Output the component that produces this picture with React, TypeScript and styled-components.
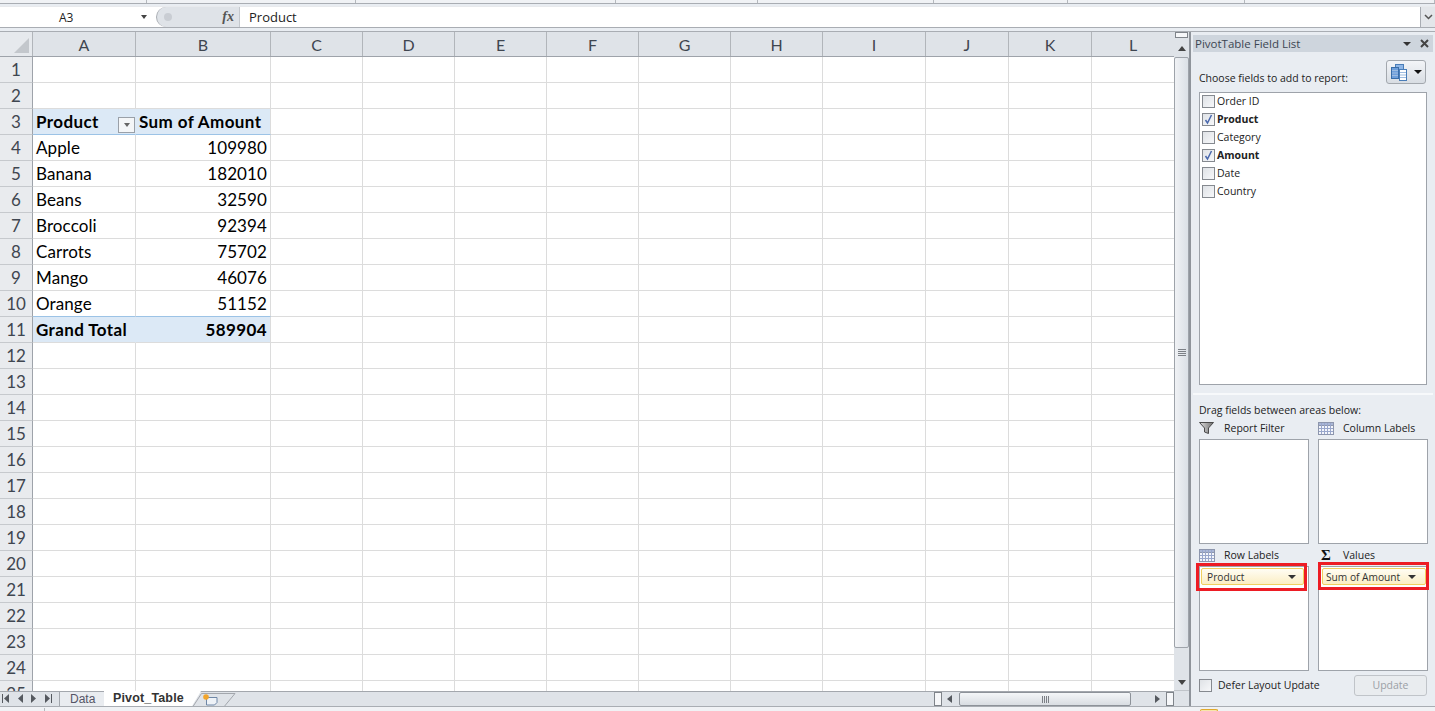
import React from "react";
import styled, { createGlobalStyle } from "styled-components";

const columns = [
    { name: "A", width: 103 },
    { name: "B", width: 135 },
    { name: "C", width: 92 },
    { name: "D", width: 92 },
    { name: "E", width: 92 },
    { name: "F", width: 92 },
    { name: "G", width: 92 },
    { name: "H", width: 92 },
    { name: "I", width: 103 },
    { name: "J", width: 83 },
    { name: "K", width: 83 },
    { name: "L", width: 83 },
];

const gridColumns = `33px ${columns.map((c) => c.width + "px").join(" ")}`;

const stripWidths = [147, 209, 260, 142, 176, 134, 177, 190];

const products = [
    ["Apple", "109980"],
    ["Banana", "182010"],
    ["Beans", "32590"],
    ["Broccoli", "92394"],
    ["Carrots", "75702"],
    ["Mango", "46076"],
    ["Orange", "51152"],
];

const fields = [
    { name: "Order ID", on: false },
    { name: "Product", on: true },
    { name: "Category", on: false },
    { name: "Amount", on: true },
    { name: "Date", on: false },
    { name: "Country", on: false },
];

const cellsFor = (row: number): [string, string, "head" | "total" | "plain"] => {
    if (row === 3) return ["Product", "Sum of Amount", "head"];
    if (row >= 4 && row <= 10) {
        const p = products[row - 4];
        return [p[0], p[1], "plain"];
    }
    if (row === 11) return ["Grand Total", "589904", "total"];
    return ["", "", "plain"];
};

const TableGlyph = () => (
    <svg width="16" height="13" viewBox="0 0 16 13">
        <rect x="0.5" y="0.5" width="15" height="12" fill="#f4f6fb" stroke="#8d96ad" />
        <rect x="0.5" y="0.5" width="15" height="3" fill="#a9b6d6" stroke="#8d96ad" />
        <path d="M3.5 1v11M6.5 1v11M9.5 1v11M12.5 1v11M1 6.5h14M1 9.5h14" stroke="#99a7cc" fill="none" />
    </svg>
);

const FilterGlyph = () => (
    <svg width="15" height="12" viewBox="0 0 15 12">
        <defs>
            <linearGradient id="funnel" x1="0" x2="1" y1="0" y2="0">
                <stop offset="0" stopColor="#e0e0e0" />
                <stop offset="1" stopColor="#6d6d6d" />
            </linearGradient>
        </defs>
        <path d="M0.5 0.5h14l-5 5.5v5.5l-4-1.5v-4z" fill="url(#funnel)" stroke="#4a4a4a" />
    </svg>
);

const CheckGlyph = () => (
    <svg width="11" height="11" viewBox="0 0 11 11">
        <path d="M2.5 6l2 3 4-8" fill="none" stroke="#4a68ad" strokeWidth="1.5" />
    </svg>
);

const FieldsGlyph = () => (
    <svg width="16" height="17" viewBox="0 0 16 17">
        <rect x="4.5" y="0.5" width="8" height="12" fill="#8fb6e6" stroke="#4a7db8" />
        <rect x="0.5" y="3.5" width="7" height="11" fill="#6f9fdb" stroke="#3a6ea8" />
        <rect x="8.5" y="5.5" width="7" height="11" fill="#fff" stroke="#4a7db8" />
        <path d="M9 8.5h6M9 11h6M9 13.5h6M1 6.5h6M1 9h6M1 11.5h6" stroke="#9dbce0" />
    </svg>
);

const NewTabGlyph = () => (
    <svg width="44" height="15" viewBox="0 0 44 15">
        <path d="M0 15L9.5 0.5H43L31 15" fill="#dfe3e8" stroke="#a3a7ad" />
        <path d="M14.5 4.5h10.5v5l-2.5 2.5h-8z" fill="#eef2f7" stroke="#6f87a6" />
        <circle cx="14" cy="4" r="2.8" fill="#f2a52c" />
    </svg>
);

const NavFirst = () => (
    <svg width="7" height="9" viewBox="0 0 7 9">
        <path d="M0.5 0v9" stroke="#55595f" />
        <path d="M7 0v9L2 4.5z" fill="#55595f" />
    </svg>
);

const NavPrev = () => (
    <svg width="5" height="9" viewBox="0 0 5 9">
        <path d="M5 0v9L0 4.5z" fill="#55595f" />
    </svg>
);

const NavNext = () => (
    <svg width="5" height="9" viewBox="0 0 5 9">
        <path d="M0 0v9L5 4.5z" fill="#55595f" />
    </svg>
);

const NavLast = () => (
    <svg width="7" height="9" viewBox="0 0 7 9">
        <path d="M0 0v9L5 4.5z" fill="#55595f" />
        <path d="M6.5 0v9" stroke="#55595f" />
    </svg>
);

const App = () => {
    return (
        <Page>
            <GlobalStyle />
            <TopStrip>
                {stripWidths.map((w, i) => (
                    <StripCell key={i} $w={w} />
                ))}
            </TopStrip>
            <FormulaBar>
                <NameBox>
                    <span>A3</span>
                    <Caret $c="#444" $mr={9} />
                </NameBox>
                <FxBlock>
                    <FxKnob />
                    <Fx>fx</Fx>
                </FxBlock>
                <FormulaText>Product</FormulaText>
                <FormulaScroll>
                    <svg width="9" height="6" viewBox="0 0 9 6">
                        <path d="M1 1l3.5 3.5L8 1" fill="none" stroke="#555" strokeWidth="1.5" />
                    </svg>
                </FormulaScroll>
            </FormulaBar>
            <Main>
                <SheetArea>
                    <Grid>
                        <HeaderRow>
                            <Corner>
                                <CornerMark />
                            </Corner>
                            {columns.map((c) => (
                                <ColHead key={c.name}>{c.name}</ColHead>
                            ))}
                        </HeaderRow>
                        {Array.from({ length: 25 }, (_, i) => i + 1).map((row) => {
                            const [a, b, kind] = cellsFor(row);
                            return (
                                <Row key={row}>
                                    <RowHead>{row}</RowHead>
                                    {columns.map((c, i) => (
                                        <Cell
                                            key={c.name}
                                            $kind={i < 2 ? kind : "plain"}
                                            $right={i === 1 && kind !== "head"}
                                            $plainEdge={i === 1 && kind !== "plain"}
                                            $blueEdge={i < 2 && row === 10}
                                        >
                                            {i === 0 && a}
                                            {i === 1 && b}
                                            {i === 0 && kind === "head" && (
                                                <FilterButton>
                                                    <Caret $c="#666" />
                                                </FilterButton>
                                            )}
                                        </Cell>
                                    ))}
                                </Row>
                            );
                        })}
                    </Grid>
                    <SheetBar>
                        <TabNav>
                            <NavFirst />
                            <NavPrev />
                            <NavNext />
                            <NavLast />
                        </TabNav>
                        <Tab>Data</Tab>
                        <ActiveTab>Pivot_Table</ActiveTab>
                        <NewTab>
                            <NewTabGlyph />
                        </NewTab>
                        <BarGap />
                        <SplitHandle />
                        <HScroll>
                            <ArrowLeft />
                            <HThumb>
                                <Grip />
                            </HThumb>
                            <ArrowRight />
                        </HScroll>
                        <SplitHandle />
                    </SheetBar>
                </SheetArea>
                <VScroll>
                    <VSplit />
                    <ArrowUp />
                    <VThumb>
                        <VGrip />
                    </VThumb>
                    <VTrack />
                    <ArrowDown />
                    <VFoot />
                </VScroll>
                <Panel>
                    <PanelTitle>
                        <span>PivotTable Field List</span>
                        <TitleIcons>
                            <Caret $c="#333" $big />
                            <svg width="9" height="9" viewBox="0 0 9 9">
                                <path d="M1 1l7 7M8 1l-7 7" stroke="#444" strokeWidth="2" />
                            </svg>
                        </TitleIcons>
                    </PanelTitle>
                    <ChooseRow>
                        <ChooseLabel>Choose fields to add to report:</ChooseLabel>
                        <LayoutButton>
                            <FieldsGlyph />
                            <Caret $c="#111" $big />
                        </LayoutButton>
                    </ChooseRow>
                    <FieldBox>
                        {fields.map((f) => (
                            <FieldRow key={f.name}>
                                <CheckBox>{f.on && <CheckGlyph />}</CheckBox>
                                <FieldName $on={f.on}>{f.name}</FieldName>
                            </FieldRow>
                        ))}
                    </FieldBox>
                    <Splitter />
                    <DragLabel>Drag fields between areas below:</DragLabel>
                    <Areas>
                        <Area>
                            <AreaTitle>
                                <AreaIcon>
                                    <FilterGlyph />
                                </AreaIcon>
                                Report Filter
                            </AreaTitle>
                            <AreaBox />
                        </Area>
                        <Area>
                            <AreaTitle>
                                <AreaIcon>
                                    <TableGlyph />
                                </AreaIcon>
                                Column Labels
                            </AreaTitle>
                            <AreaBox />
                        </Area>
                        <Area>
                            <AreaTitle>
                                <AreaIcon>
                                    <TableGlyph />
                                </AreaIcon>
                                Row Labels
                            </AreaTitle>
                            <AreaBox>
                                <Chip $l={1} $r={4} $pr={7} $pl={5}>
                                    <span>Product</span>
                                    <Caret $c="#333" $big />
                                </Chip>
                                <Highlight $left={-4} $right={1} $top={-4} />
                            </AreaBox>
                        </Area>
                        <Area>
                            <AreaTitle>
                                <AreaIcon>
                                    <Sigma>Σ</Sigma>
                                </AreaIcon>
                                Values
                            </AreaTitle>
                            <AreaBox>
                                <Chip $l={3} $r={1} $pr={9} $pl={3}>
                                    <span>Sum of Amount</span>
                                    <Caret $c="#333" $big />
                                </Chip>
                                <Highlight $left={-1} $right={-2} $top={-5} />
                            </AreaBox>
                        </Area>
                    </Areas>
                    <PanelFoot>
                        <DeferLabel>
                            <CheckBox />
                            <span>Defer Layout Update</span>
                        </DeferLabel>
                        <UpdateButton>Update</UpdateButton>
                    </PanelFoot>
                </Panel>
            </Main>
            <StatusEdge>
                <StatusTick />
                <StatusBadge />
            </StatusEdge>
        </Page>
    );
};

export default App;

const GlobalStyle = createGlobalStyle`
    html, body {
        margin: 0;
        padding: 0;
        overflow: hidden;
    }
    * {
        box-sizing: border-box;
    }
`;

const Page = styled.div`
    width: 1435px;
    height: 711px;
    display: flex;
    flex-direction: column;
    background: #e9edf2;
    overflow: hidden;
    font-family: "Open Sans", "Noto Sans", sans-serif;
`;

const TopStrip = styled.div`
    height: 4px;
    display: flex;
    background: #f0f2f5;
    border-bottom: 1px solid #a9adb3;
`;

const StripCell = styled.div<{ $w: number }>`
    width: ${(p) => p.$w}px;
    border-right: 1px solid #b4b8bd;
`;

const FormulaBar = styled.div`
    height: 22px;
    margin-top: 2px;
    display: flex;
    background: #fff;
    border-top: 1px solid #e8eaed;
    border-bottom: 1px solid #a9adb3;
    align-items: stretch;
`;

const NameBox = styled.div`
    width: 156px;
    display: flex;
    align-items: center;
    justify-content: space-between;
    padding-left: 59px;
    font-size: 12px;
    color: #222;
`;

const FxBlock = styled.div`
    width: 84px;
    display: flex;
    align-items: center;
    justify-content: space-between;
    background: #dfe3e8;
    border-radius: 11px 0 0 11px;
    border-left: 1px solid #a9adb3;
    border-right: 1px solid #c4c8cd;
    padding: 0 5px 0 7px;
`;

const FxKnob = styled.div`
    width: 8px;
    height: 8px;
    border-radius: 50%;
    background: #c9cdd3;
`;

const Fx = styled.i`
    font-family: "Liberation Serif", serif;
    font-size: 14px;
    font-weight: 700;
    color: #555;
`;

const FormulaText = styled.div`
    flex: 1;
    padding-left: 9px;
    font-size: 13px;
    line-height: 20px;
    color: #222;
`;

const FormulaScroll = styled.div`
    width: 15px;
    display: flex;
    align-items: center;
    justify-content: center;
    background: #e3e6ea;
    border-left: 1px solid #a9adb3;
`;

const Main = styled.div`
    flex: 1;
    min-height: 0;
    margin-top: 3px;
    display: flex;
    border-top: 1px solid #a9adb3;
`;

const SheetArea = styled.div`
    width: 1174px;
    display: flex;
    flex-direction: column;
    background: #fff;
`;

const Grid = styled.div`
    height: 659px;
    overflow: hidden;
    font-family: "Lato", "Open Sans", sans-serif;
`;

const HeaderRow = styled.div`
    height: 25px;
    display: grid;
    grid-template-columns: ${gridColumns};
    background: #dfe3e8;
    border-bottom: 1px solid #9ea3aa;
`;

const Corner = styled.div`
    position: relative;
    background: #e6e9ed;
    border-right: 1px solid #b1b5ba;
`;

const CornerMark = styled.div`
    position: absolute;
    right: 3px;
    bottom: 3px;
    width: 0;
    height: 0;
    border-left: 15px solid transparent;
    border-bottom: 15px solid #c3c7cc;
`;

const ColHead = styled.div`
    display: flex;
    align-items: center;
    justify-content: center;
    font-size: 16px;
    color: #3f4650;
    border-right: 1px solid #b1b5ba;
`;

const Row = styled.div`
    height: 26px;
    display: grid;
    grid-template-columns: ${gridColumns};
`;

const RowHead = styled.div`
    display: flex;
    align-items: center;
    justify-content: center;
    font-size: 17px;
    color: #3f4650;
    background: #e9ebee;
    border-right: 1px solid #9ea3aa;
    border-bottom: 1px solid #c6c9cd;
`;

const Cell = styled.div<{
    $kind: "head" | "total" | "plain";
    $right?: boolean;
    $plainEdge?: boolean;
    $blueEdge?: boolean;
}>`
    position: relative;
    display: flex;
    align-items: center;
    padding: 0 3px;
    font-size: 17px;
    color: #000;
    justify-content: ${(p) => (p.$right ? "flex-end" : "flex-start")};
    font-weight: ${(p) => (p.$kind === "plain" ? 400 : 700)};
    letter-spacing: ${(p) => (p.$kind === "plain" ? "0.1px" : "0.4px")};
    background: ${(p) => (p.$kind === "plain" ? "#fff" : "#dce9f6")};
    border-right: 1px solid ${(p) => (p.$kind === "plain" || p.$plainEdge ? "#dcdcdc" : "#dce9f6")};
    border-bottom: 1px solid ${(p) => (p.$kind === "head" || p.$blueEdge ? "#9cc3e6" : "#dcdcdc")};
`;

const FilterButton = styled.div`
    position: absolute;
    right: 0;
    bottom: 1px;
    width: 17px;
    height: 16px;
    display: flex;
    align-items: center;
    justify-content: center;
    background: #f4f6f8;
    border: 1px solid #9aa0a8;
`;

const Caret = styled.span<{ $c: string; $big?: boolean; $mr?: number }>`
    display: inline-block;
    width: 0;
    height: 0;
    margin-right: ${(p) => p.$mr || 0}px;
    border-left: ${(p) => (p.$big ? 4 : 3.5)}px solid transparent;
    border-right: ${(p) => (p.$big ? 4 : 3.5)}px solid transparent;
    border-top: 4px solid ${(p) => p.$c};
`;

const SheetBar = styled.div`
    height: 15px;
    display: flex;
    align-items: flex-start;
    background: #dfe3e8;
    box-shadow: inset 0 1px 0 #a3a7ad;
`;

const TabNav = styled.div`
    width: 59px;
    height: 100%;
    display: flex;
    align-items: center;
    justify-content: space-between;
    padding: 0 7px 0 2px;
`;

const Tab = styled.div`
    width: 45px;
    height: 15px;
    padding-left: 10px;
    font-size: 12px;
    line-height: 15px;
    color: #556;
    background: #e9ecf0;
    border-top: 1px solid #a3a7ad;
    border-left: 1px solid #a3a7ad;
    font-family: "Liberation Sans", sans-serif;
`;

const ActiveTab = styled.div`
    width: 97px;
    height: 15px;
    padding-left: 9px;
    font-size: 12.5px;
    line-height: 15px;
    font-weight: 700;
    letter-spacing: 0.15px;
    color: #333;
    background: #fff;
    clip-path: polygon(0 0, 97px 0, 88px 100%, 0 100%);
    font-family: "Liberation Sans", sans-serif;
`;

const NewTab = styled.div`
    width: 44px;
    height: 15px;
    margin-left: -9px;
`;

const BarGap = styled.div`
    flex: 1;
`;

const SplitHandle = styled.div`
    width: 8px;
    height: 14px;
    margin-top: 1px;
    background: #f6f7f9;
    border: 1px solid #7f848a;
`;

const HScroll = styled.div`
    width: 224px;
    height: 15px;
    display: flex;
    align-items: center;
    padding: 0 6px 0 5px;
`;

const ArrowLeft = styled.span`
    width: 0;
    height: 0;
    border-top: 4px solid transparent;
    border-bottom: 4px solid transparent;
    border-right: 5px solid #55595f;
`;

const ArrowRight = styled.span`
    width: 0;
    height: 0;
    margin-left: auto;
    border-top: 4px solid transparent;
    border-bottom: 4px solid transparent;
    border-left: 5px solid #55595f;
`;

const HThumb = styled.div`
    width: 172px;
    height: 14px;
    margin: 1px 0 0 7px;
    display: flex;
    align-items: center;
    justify-content: center;
    background: linear-gradient(#f4f6f8, #d9dde2);
    border: 1px solid #8d9299;
    border-radius: 2px;
`;

const Grip = styled.div`
    width: 7px;
    height: 7px;
    background: repeating-linear-gradient(90deg, #7c8086 0 1px, transparent 1px 2px);
`;

const VScroll = styled.div`
    width: 15px;
    display: flex;
    flex-direction: column;
    background: #dfe3e8;
`;

const VSplit = styled.div`
    height: 6px;
    margin: 0 1px;
    background: #f6f7f9;
    border: 1px solid #7f848a;
`;

const ArrowUp = styled.div`
    width: 0;
    height: 0;
    margin: 8px auto 6px;
    border-left: 4px solid transparent;
    border-right: 4px solid transparent;
    border-bottom: 5px solid #444;
`;

const VThumb = styled.div`
    height: 591px;
    display: flex;
    align-items: center;
    justify-content: center;
    background: linear-gradient(90deg, #f0f2f5, #dbe0e6);
    border: 1px solid #9ea3aa;
    border-radius: 2px;
`;

const VGrip = styled.div`
    width: 8px;
    height: 7px;
    background: repeating-linear-gradient(0deg, #7c8086 0 1px, transparent 1px 2px);
`;

const VTrack = styled.div`
    flex: 1;
`;

const ArrowDown = styled.div`
    width: 0;
    height: 0;
    margin: 0 auto 5px;
    border-left: 4px solid transparent;
    border-right: 4px solid transparent;
    border-top: 5px solid #444;
`;

const VFoot = styled.div`
    height: 16px;
    border-top: 1px solid #c0c4c9;
`;

const Panel = styled.div`
    flex: 1;
    display: flex;
    flex-direction: column;
    padding: 3px 2px 0 2px;
    background: #e9edf2;
    font-size: 10.5px;
    color: #222;
    border-left: 2px solid #8f949b;
`;

const PanelTitle = styled.div`
    height: 17px;
    display: flex;
    align-items: center;
    justify-content: space-between;
    padding: 0 4px 0 2px;
    background: #ced5dd;
    font-size: 11.5px;
    color: #3c4652;
`;

const TitleIcons = styled.div`
    display: flex;
    align-items: center;
    gap: 9px;
`;

const ChooseRow = styled.div`
    height: 40px;
    display: flex;
    justify-content: space-between;
    align-items: flex-start;
    padding: 8px 7px 0 6px;
    line-height: 14px;
`;

const ChooseLabel = styled.span`
    margin-top: 11px;
`;

const LayoutButton = styled.div`
    width: 40px;
    height: 24px;
    display: flex;
    align-items: center;
    justify-content: center;
    gap: 7px;
    background: linear-gradient(#f3f5f8, #d8dde3);
    border: 1px solid #a3a8ae;
    border-radius: 3px;
`;

const FieldBox = styled.div`
    height: 293px;
    margin: 0 6px;
    padding: 0 2px;
    background: #fff;
    border: 1px solid #9ea3aa;
`;

const FieldRow = styled.div`
    height: 18px;
    display: flex;
    align-items: center;
    gap: 2px;

    &:first-child {
        height: 17px;
        padding-bottom: 1px;
    }
`;

const CheckBox = styled.div`
    width: 13px;
    height: 13px;
    flex: none;
    display: flex;
    align-items: center;
    justify-content: center;
    background: linear-gradient(135deg, #dfe2e6, #f7f8fa);
    border: 1px solid #85898f;
`;

const FieldName = styled.span<{ $on: boolean }>`
    font-weight: ${(p) => (p.$on ? 700 : 400)};
`;

const Splitter = styled.div`
    height: 2px;
    margin-top: 8px;
    background: #f7f9fb;
`;

const DragLabel = styled.div`
    padding: 9px 0 0 6px;
    line-height: 13px;
`;

const Areas = styled.div`
    display: grid;
    grid-template-columns: 110px 110px;
    column-gap: 9px;
    padding-left: 6px;
`;

const Area = styled.div`
    display: flex;
    flex-direction: column;
`;

const AreaTitle = styled.div`
    height: 22px;
    display: flex;
    align-items: center;
`;

const AreaIcon = styled.div`
    width: 25px;
    display: flex;
    align-items: center;
`;

const Sigma = styled.span`
    padding-left: 3px;
    font-size: 15px;
    line-height: 15px;
    font-weight: 700;
    color: #111;
    font-family: "Liberation Serif", serif;
`;

const AreaBox = styled.div`
    position: relative;
    height: 105px;
    background: #fff;
    border: 1px solid #9ea3aa;
`;

const Chip = styled.div<{ $l: number; $r: number; $pl: number; $pr: number }>`
    height: 17px;
    margin: 1px ${(p) => p.$r}px 0 ${(p) => p.$l}px;
    display: flex;
    align-items: center;
    justify-content: space-between;
    padding: 0 ${(p) => p.$pr}px 0 ${(p) => p.$pl}px;
    font-size: 10.2px;
    background: linear-gradient(#fffdf4, #fbeec4);
    border: 1px solid #f0cf5f;
    border-radius: 2px;
    color: #333;
`;

const Highlight = styled.div<{ $left: number; $right: number; $top: number }>`
    position: absolute;
    left: ${(p) => p.$left}px;
    right: ${(p) => p.$right}px;
    top: ${(p) => p.$top}px;
    height: 28px;
    border: 3px solid #ed1c24;
    pointer-events: none;
`;

const PanelFoot = styled.div`
    height: 28px;
    display: flex;
    align-items: center;
    justify-content: space-between;
    padding: 0 6px 0 6px;
`;

const DeferLabel = styled.label`
    display: flex;
    align-items: center;
    gap: 6px;
`;

const UpdateButton = styled.div`
    width: 73px;
    height: 21px;
    display: flex;
    align-items: center;
    justify-content: center;
    color: #9ba0a6;
    background: #e9ecef;
    border: 1px solid #c0c4c9;
    border-radius: 3px;
`;

const StatusEdge = styled.div`
    height: 5px;
    display: flex;
    align-items: flex-end;
    background: #f0f2f5;
    border-top: 1px solid #a9adb3;
`;

const StatusTick = styled.div`
    width: 1px;
    height: 3px;
    margin-left: 44px;
    background: #b4b8bd;
`;

const StatusBadge = styled.div`
    width: 18px;
    height: 2px;
    margin-left: 1155px;
    background: #f7e6a8;
    border: 1px solid #e0a92c;
    border-bottom: 0;
    border-radius: 2px 2px 0 0;
`;
